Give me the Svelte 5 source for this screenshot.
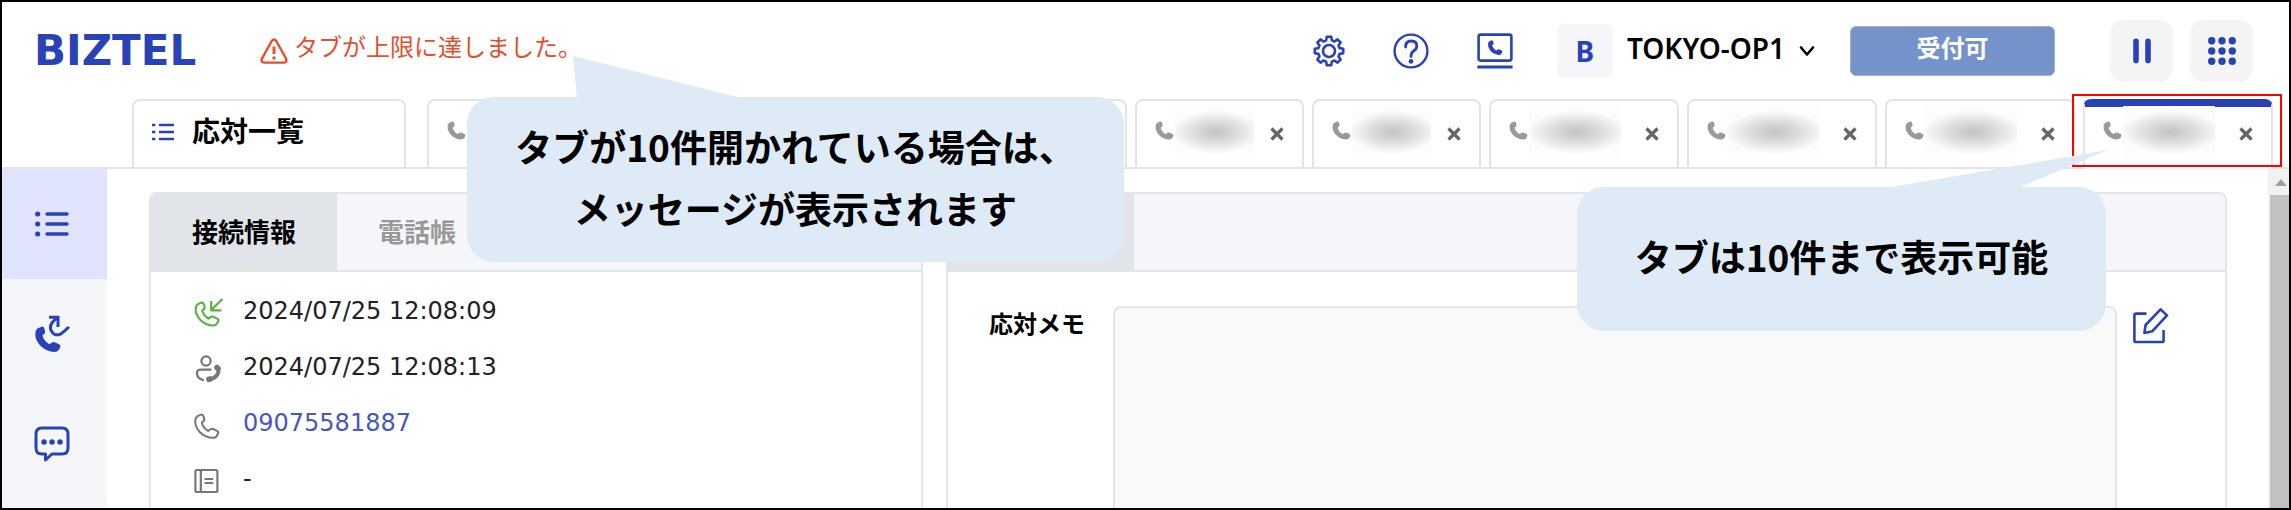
<script>
  const callTabs = [
    { id: 1, wide: false },
    { id: 2, wide: false },
    { id: 3, wide: false },
    { id: 4, wide: false },
    { id: 5, wide: false },
    { id: 6, wide: false },
    { id: 7, wide: true },
    { id: 8, wide: true },
    { id: 9, wide: true },
    { id: 10, wide: true },
  ];

  let activeTab = $state(10);
  let memo = $state("");

  // Outline of the settings gear: eight teeth round a 32px box
  function gearPath() {
    const points = [];
    for (let i = 0; i < 8; i++) {
      for (const [offset, r] of [[-15, 11], [-9, 14.4], [9, 14.4], [15, 11]]) {
        const a = ((i * 45 + offset) * Math.PI) / 180;
        points.push(`${(16 + r * Math.cos(a)).toFixed(2)} ${(16 + r * Math.sin(a)).toFixed(2)}`);
      }
    }
    return `M${points.join("L")}Z`;
  }
</script>

{#snippet handset()}
  <path
    d="M2.2 1.6L4.4.6Q5.8 0 6.4 1.2L7.2 3.6Q7.5 4.8 6.4 5.5L5.4 6.3Q6 9.8 10 12.4L11.6 11.4Q12.5 10.6 13.6 11L16.6 12.4Q17.8 13 17.4 14.2L16.2 16.4Q15.4 17.5 13.6 17.5Q8 17.5 3.6 13Q0 8.6.6 4.4Q.9 2.4 2.2 1.6Z"
  />
{/snippet}

<div class="app">
  <header>
    <div class="logo">BIZTEL</div>
    <div class="alert" role="alert">
      <svg width="28" height="26" viewBox="0 0 28 26" fill="none" stroke="currentColor" stroke-width="2.4">
        <path d="M11.8 3Q14 0 16.2 3L26 20.5Q27.4 24.4 24 24.6H4Q.6 24.4 2 20.5Z" />
        <path d="M14 8.5V16M14 18.6V21.4" stroke-width="3" />
      </svg>
      <p>タブが上限に達しました。</p>
    </div>

    <div class="tools">
      <button class="icon" aria-label="設定">
        <svg width="32" height="32" viewBox="0 0 32 32" fill="none" stroke="currentColor" stroke-width="2.6" stroke-linejoin="round">
          <path d={gearPath()} />
          <circle cx="16" cy="16" r="6" />
        </svg>
      </button>
      <button class="icon" aria-label="ヘルプ">
        <svg width="36" height="36" viewBox="0 0 36 36" fill="none" stroke="currentColor" stroke-width="2.4">
          <circle cx="18" cy="18" r="16.4" />
          <path d="M12.6 14Q12.6 8 18.2 8Q23.8 8 23.8 13Q23.8 16 20.6 18Q18 19.6 18 23.6" stroke-width="2.8" stroke-linecap="round" />
          <circle cx="18" cy="28.4" r="2.4" fill="currentColor" stroke="none" />
        </svg>
      </button>
      <button class="icon" aria-label="電話">
        <svg width="36" height="36" viewBox="0 0 36 36" fill="none" stroke="currentColor" stroke-width="2.6">
          <rect x="1.6" y="1.6" width="32.8" height="26" rx="2" />
          <path d="M.4 34H35.6" stroke-width="3" />
          <g transform="translate(10.5 7) scale(.85)" fill="currentColor" stroke="none">{@render handset()}</g>
        </svg>
      </button>
    </div>

    <button class="user" aria-haspopup="menu">
      <span class="avatar">B</span>
      <span class="name">TOKYO-OP1</span>
      <svg width="16" height="12" viewBox="0 0 16 12" fill="none" stroke="currentColor" stroke-width="2.6" stroke-linecap="round" stroke-linejoin="round">
        <path d="M2 2.5L8 9.5L14 2.5" />
      </svg>
    </button>

    <button class="status">受付可</button>

    <div class="actions">
      <button class="square" aria-label="一時停止">
        <svg width="28" height="28" viewBox="0 0 28 28" stroke="currentColor" stroke-width="5.6" stroke-linecap="round">
          <path d="M8 4.4V23.4M20 4.4V23.4" />
        </svg>
      </button>
      <button class="square" aria-label="メニュー">
        <svg width="28" height="28" viewBox="0 0 28 28" fill="currentColor">
          {#each [3.7, 14, 24.3] as cy}
            {#each [3.7, 14, 24.3] as cx}
              <circle {cx} {cy} r="3.7" />
            {/each}
          {/each}
        </svg>
      </button>
    </div>
  </header>

  <nav class="tabs">
    <button class="tab list-tab">
      <svg width="22" height="18" viewBox="0 0 22 18" stroke="currentColor" stroke-width="2.6">
        <path d="M0 2H3.4M0 9H3.4M0 16H3.4M7 2H22M7 9H22M7 16H22" />
      </svg>
      応対一覧
    </button>
    <div class="call-tabs">
      {#each callTabs as tab (tab.id)}
        <div class="tab call-tab" class:wide={tab.wide} class:active={activeTab === tab.id}>
          <button class="caller" aria-label="通話" onclick={() => (activeTab = tab.id)}>
            <svg width="19" height="19" viewBox="0 0 18 18" fill="currentColor">{@render handset()}</svg>
            <span class="masked"></span>
          </button>
          <button class="close" aria-label="閉じる">
            <svg width="14" height="14" viewBox="0 0 14 14" stroke="currentColor" stroke-width="3.2">
              <path d="M1.5 1.5L12.5 12.5M12.5 1.5L1.5 12.5" />
            </svg>
          </button>
        </div>
      {/each}
    </div>
  </nav>

  <div class="body">
    <aside>
      <button class="side active" aria-label="一覧">
        <svg width="34" height="26" viewBox="0 0 34 26" fill="none" stroke="currentColor" stroke-width="3.4" stroke-linecap="round">
          <path d="M12 3H32M12 13H32M12 23H32" />
          <path d="M2.6 3H2.7M2.6 13H2.7M2.6 23H2.7" stroke-width="5" />
        </svg>
      </button>
      <button class="side" aria-label="発信履歴">
        <svg width="36" height="38" viewBox="0 0 36 38" fill="none" stroke="currentColor" stroke-width="3">
          <g transform="translate(.5 11) scale(1.48)" fill="currentColor" stroke="none">{@render handset()}</g>
          <path d="M15 2.2H24V12" />
          <path d="M23.6 2.8Q14.6 8.6 17 15.4Q20 22 27 18.8Q31 16 34 12.8" stroke-linecap="round" />
        </svg>
      </button>
      <button class="side" aria-label="チャット">
        <svg width="36" height="36" viewBox="0 0 36 36" fill="none" stroke="currentColor" stroke-width="3" stroke-linejoin="round">
          <path d="M8 2H28Q34 2 34 8V22Q34 28 28 28H18L11.5 34V28H8Q2 28 2 22V8Q2 2 8 2Z" />
          <path d="M10 16H10.1M18 16H18.1M26 16H26.1" stroke-width="5.4" stroke-linecap="round" />
        </svg>
      </button>
    </aside>

    <main>
      <section class="panel">
        <div class="panel-tabs">
          <button class="panel-tab selected">接続情報</button>
          <button class="panel-tab">電話帳</button>
        </div>
        <ul class="info">
          <li>
            <svg class="green" width="30" height="30" viewBox="0 0 30 30" fill="none" stroke="currentColor" stroke-width="2.2" stroke-linejoin="round">
              <g transform="translate(2 4) scale(1.34)" stroke-width="1.6">{@render handset()}</g>
              <path d="M29.4 1L18.6 11.8M18.2 3V12.4H28.4" />
            </svg>
            <span>2024/07/25 12:08:09</span>
          </li>
          <li>
            <svg width="30" height="30" viewBox="0 0 30 30" fill="none" stroke="currentColor" stroke-width="2.2" stroke-linecap="round">
              <circle cx="13" cy="7" r="4.6" />
              <path d="M17.6 15.6H8Q4 15.6 4 19Q4 24.6 10 26" />
              <path d="M25.4 15Q26.4 22.4 17.6 25.4" stroke-width="4" />
              <path d="M24 13.4L25 14.4M16 25.4L17 25" stroke-width="5.6" />
            </svg>
            <span>2024/07/25 12:08:13</span>
          </li>
          <li>
            <svg width="30" height="30" viewBox="0 0 30 30" fill="none" stroke="currentColor" stroke-linejoin="round">
              <g transform="translate(1.5 4) scale(1.36)" stroke-width="1.5">{@render handset()}</g>
            </svg>
            <a href="tel:09075581887">09075581887</a>
          </li>
          <li>
            <svg width="30" height="30" viewBox="0 0 30 30" fill="none" stroke="currentColor" stroke-width="2.2">
              <rect x="2.4" y="4" width="22" height="22" rx="1.6" />
              <path d="M7.8 4V26M11.6 13H20.2M11.6 17H20.2" />
            </svg>
            <span>-</span>
          </li>
        </ul>
      </section>

      <section class="panel">
        <div class="panel-tabs">
          <div class="panel-tab selected"></div>
        </div>
        <div class="memo">
          <label for="memo">応対メモ</label>
          <textarea id="memo" bind:value={memo}></textarea>
          <button class="icon edit" aria-label="編集">
            <svg width="36" height="36" viewBox="0 0 36 36" fill="none" stroke="currentColor" stroke-width="2.6" stroke-linejoin="round">
              <path d="M13.5 5.6H3Q1.4 5.6 1.4 7.2V32.4Q1.4 34 3 34H29Q30.6 34 30.6 32.4V22" />
              <path d="M27.6 1.4L34 7.4L19.4 23.2L11.4 25L12.6 17Z" />
            </svg>
          </button>
        </div>
      </section>
    </main>

    <div class="scrollbar" aria-hidden="true">
      <span class="arrow"></span>
      <span class="thumb"></span>
    </div>
  </div>

  <div class="callout message-callout">
    <svg width="170" height="42" viewBox="0 0 170 42" fill="currentColor">
      <path d="M0 0L4 42H168Z" />
    </svg>
    <p>タブが10件開かれている場合は、<br />メッセージが表示されます</p>
  </div>

  <div class="callout limit-callout">
    <svg width="222" height="38" viewBox="0 0 222 38" fill="currentColor">
      <path d="M222 0L0 38H132Z" />
    </svg>
    <p>タブは10件まで表示可能</p>
  </div>
</div>

<style>
  :global(body) {
    margin: 0;
    background: #fff;
  }

  .app {
    position: relative;
    display: flex;
    flex-direction: column;
    box-sizing: border-box;
    min-height: 100vh;
    border: 2px solid #000;
    overflow: hidden;
    color: #000;
    font-family: "DejaVu Sans", "Noto Sans CJK JP", sans-serif;
    font-size: 24px;
  }

  .app * {
    box-sizing: border-box;
  }

  svg {
    display: block;
    flex: none;
  }

  p {
    margin: 0;
  }

  button {
    display: flex;
    align-items: center;
    justify-content: center;
    padding: 0;
    border: 0;
    background: none;
    color: inherit;
    font: inherit;
    cursor: pointer;
  }

  header {
    display: flex;
    align-items: center;
    height: 97px;
    padding: 0 36px 0 32px;
  }

  .logo {
    width: 226px;
    color: #2a42b8;
    font-size: 42px;
    font-weight: 700;
    line-height: 40px;
  }

  .alert {
    display: flex;
    align-items: center;
    gap: 6px;
    color: #e2502f;
  }

  .alert p {
    padding-bottom: 6px;
    line-height: 32px;
  }

  .tools {
    display: flex;
    align-items: center;
    gap: 48px;
    margin-left: auto;
  }

  .icon {
    color: #2a42b8;
  }

  .user {
    gap: 14px;
    margin-left: 44px;
  }

  .avatar {
    width: 56px;
    height: 54px;
    border-radius: 8px;
    background: #f5f6f9;
    color: #2a42b8;
    font-family: "Noto Sans", sans-serif;
    font-size: 28px;
    font-weight: 700;
    line-height: 54px;
  }

  .name {
    padding-bottom: 6px;
    font-family: "Noto Sans", sans-serif;
    font-size: 28px;
    font-weight: 600;
    line-height: 40px;
  }

  .status {
    width: 205px;
    height: 50px;
    margin-left: 35px;
    padding-bottom: 8px;
    border: 1px solid #a9afbf;
    border-radius: 6px;
    background: #7593cb;
    color: #fff;
    font-weight: 700;
  }

  .actions {
    display: flex;
    gap: 17px;
    margin-left: 55px;
  }

  .square {
    width: 63px;
    height: 62px;
    border-radius: 14px;
    background: #f4f4f4;
    color: #2a42b8;
  }

  .tabs {
    display: flex;
    gap: 21px;
    height: 70px;
    padding: 0 16px 0 130px;
    border-bottom: 2px solid #e4e4e4;
  }

  .tab {
    border: 2px solid #e4e4e4;
    border-bottom: 0;
    border-radius: 8px 8px 0 0;
    background: #fff;
  }

  .list-tab {
    flex: none;
    justify-content: flex-start;
    gap: 18px;
    width: 274px;
    padding: 0 0 8px 18px;
    font-size: 28px;
    font-weight: 700;
  }

  .list-tab svg {
    margin-top: 4px;
    color: #2a42b8;
  }

  .call-tabs {
    display: flex;
    flex: 1;
    gap: 8px;
  }

  .call-tab {
    position: relative;
    display: flex;
    flex: 1 1 169px;
    align-items: center;
    justify-content: space-between;
    padding: 0 18px;
  }

  .call-tab.wide {
    flex-basis: 190px;
  }

  .call-tab.active {
    margin-bottom: -2px;
    padding-bottom: 8px;
    border-top: 8px solid #2a42b8;
  }

  /* red frame round the last tab that can be opened */
  .call-tab.active::after {
    content: "";
    position: absolute;
    inset: -13px -11px 2px -13px;
    border: 2px solid #f00;
    pointer-events: none;
  }

  .caller {
    gap: 1px;
    margin-bottom: 8px;
    color: #999;
  }

  .masked {
    width: 79px;
    height: 48px;
    background: radial-gradient(ellipse 44px 21px at 52% 54%, #c1c3c4, #dcddde 50%, #fcfcfc);
  }

  .wide .masked {
    width: 92px;
    background: radial-gradient(ellipse 50px 21px at 52% 54%, #c1c3c4, #dcddde 50%, #fcfcfc);
  }

  .close {
    color: #666;
  }

  .body {
    display: flex;
    flex: 1;
  }

  aside {
    flex: none;
    width: 105px;
    background: #f5f6f9;
  }

  .side {
    width: 100%;
    height: 110px;
    padding-right: 5px;
    color: #2a42b8;
  }

  .side.active {
    background: #e0e4ff;
  }

  main {
    display: grid;
    flex: 1;
    grid-template-columns: 29fr 48fr;
    gap: 23px;
    padding: 23px 41px 0 42px;
  }

  .panel {
    border: 2px solid #e3e5e7;
    border-bottom: 0;
    border-radius: 8px 8px 0 0;
    overflow: hidden;
  }

  .panel-tabs {
    display: flex;
    height: 78px;
    border-bottom: 2px solid #e3e5e7;
    background: #f5f6f9;
  }

  .panel-tab {
    width: 186px;
    padding-bottom: 4px;
    color: #999;
    font-size: 26px;
    font-weight: 700;
  }

  .panel-tab:not(.selected) {
    width: 160px;
  }

  .panel-tab.selected {
    background: #e1e5e9;
    color: #000;
  }

  .info {
    margin: 0;
    padding: 12px 42px 0;
    list-style: none;
    color: #222;
  }

  .info li {
    display: flex;
    align-items: center;
    gap: 20px;
    height: 56px;
  }

  .info svg {
    margin-top: 2px;
    color: #777;
  }

  .info .green {
    color: #55b344;
  }

  .info a {
    color: #4557c4;
    text-decoration: none;
  }

  .info span,
  .info a {
    padding-bottom: 2px;
    line-height: 32px;
  }

  .memo {
    display: flex;
    align-items: flex-start;
    height: 100%;
    padding: 34px 56px 0 41px;
  }

  .memo label {
    flex: none;
    width: 124px;
    font-weight: 700;
    line-height: 38px;
  }

  textarea {
    flex: 1;
    align-self: stretch;
    padding: 12px;
    border: 2px solid #e3e5e7;
    border-bottom: 0;
    border-radius: 8px 8px 0 0;
    background: #f9f9f9;
    font: inherit;
    resize: none;
  }

  .edit {
    margin: 2px 0 0 16px;
  }

  .scrollbar {
    flex: none;
    display: flex;
    flex-direction: column;
    width: 21px;
    background: #f1f1f1;
  }

  .arrow {
    height: 26px;
    padding: 10px 0 0 7px;
  }

  .arrow::before {
    content: "";
    display: block;
    width: 0;
    border: 6px solid transparent;
    border-top: 0;
    border-bottom: 7px solid #a0a0a0;
  }

  .thumb {
    flex: 1;
    margin-left: 2px;
    background: #c1c1c1;
  }

  .callout {
    position: absolute;
    display: flex;
    align-items: center;
    justify-content: center;
    padding-bottom: 6px;
    border-radius: 27px;
    background: #deeaf6;
    font-family: "Noto Sans CJK JP", sans-serif;
    font-size: 37px;
    font-weight: 700;
    line-height: 62px;
    text-align: center;
    white-space: nowrap;
  }

  .callout svg {
    position: absolute;
    bottom: calc(100% - 1px);
    color: #deeaf6;
  }

  .message-callout {
    top: 95px;
    left: 465px;
    width: 657px;
    height: 165px;
  }

  .message-callout svg {
    left: 106px;
  }

  .limit-callout {
    top: 185px;
    right: 183px;
    width: 529px;
    height: 144px;
  }

  .limit-callout svg {
    right: -2px;
  }
</style>
